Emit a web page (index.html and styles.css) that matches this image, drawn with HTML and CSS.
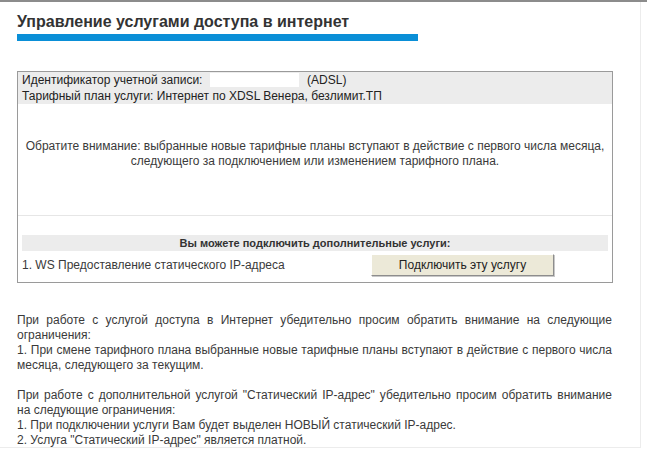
FILE: index.html
```html
<html>
  <head>
    <meta charset="utf-8">
    <link rel="stylesheet" href="styles.css">
  </head>
  <body>
    <div class="frame">
      <div class="page">
        <h1 class="page-title">Управление услугами доступа в интернет</h1>

        <div class="account-box">
          <div class="account-head">
            <div>Идентификатор учетной записи: <span class="account-id"></span> (ADSL)</div>
            <div>Тарифный план услуги: Интернет по XDSL Венера, безлимит.ТП</div>
          </div>
          <div class="notice">
            Обратите внимание: выбранные новые тарифные планы вступают в действие с первого числа месяца,
            следующего за подключением или изменением тарифного плана.
          </div>
          <div class="extras">
            <div class="extras-head">Вы можете подключить дополнительные услуги:</div>
            <div class="extras-row">
              <span class="extras-name">1. WS Предоставление статического IP-адреса</span>
              <button class="connect-btn">Подключить эту услугу</button>
            </div>
          </div>
        </div>

        <div class="rules">
          <p>При работе с услугой доступа в Интернет убедительно просим обратить внимание на следующие ограничения:<br>
          1. При смене тарифного плана выбранные новые тарифные планы вступают в действие с первого числа месяца, следующего за текущим.</p>
          <p>При работе с дополнительной услугой "Статический IP-адрес" убедительно просим обратить внимание на следующие ограничения:<br>
          1. При подключении услуги Вам будет выделен НОВЫЙ статический IP-адрес.<br>
          2. Услуга "Статический IP-адрес" является платной.</p>
        </div>
      </div>
    </div>
  </body>
</html>
```
FILE: styles.css
```css
body {
    margin: 0;
    background: #fff;
    font-family: "Liberation Sans", Arial, sans-serif;
    font-size: 12px;
    color: #3a3a3a;
}
.frame {
    border-top: 2px solid #8c8c8c;
    height: 445px;
}
.page {
    width: 623px;
    height: 445px;
    padding-left: 17px;
    border-right: 1px solid #ececec;
    border-bottom: 1px solid #ececec;
}
.page-title {
    display: inline-block;
    width: 401px;
    margin: 11px 0 0 0;
    padding-bottom: 3px;
    border-bottom: 7px solid #0a8fd7;
    font-size: 16px;
    line-height: 18px;
    font-weight: bold;
    color: #333;
}
.account-box {
    width: 594px;
    margin-top: 30px;
    border: 1px solid #9a9a9a;
}
.account-head {
    background: #ececec;
    padding: 0 4px;
    line-height: 16px;
    color: #222;
}
.account-id {
    display: inline-block;
    width: 89px;
    height: 14px;
    margin: 0 5px 0 4px;
    vertical-align: -3px;
    background: #fff;
}
.notice {
    padding: 35px 4px 46px;
    line-height: 15px;
    text-align: center;
    border-bottom: 1px solid #e6e6e6;
}
.extras {
    padding: 19px 4px 6px;
}
.extras-head {
    background: #ececec;
    line-height: 16px;
    text-align: center;
    font-size: 11px;
    font-weight: bold;
    color: #333;
}
.extras-row {
    display: flex;
    align-items: center;
    padding-top: 3px;
}
.extras-name {
    width: 349px;
}
.connect-btn {
    width: 183px;
    height: 22px;
    padding: 0;
    font-family: inherit;
    font-size: 12px;
    color: #222;
    background: #ece9d8;
    border: 1px solid;
    border-color: #fff #8d8d8d #8d8d8d #fff;
    box-shadow: 1px 1px 0 #c8c8c8;
}
.rules {
    width: 595px;
    margin-top: 30px;
    line-height: 15px;
    text-align: justify;
}
.rules p {
    margin: 0 0 15px 0;
}
```
